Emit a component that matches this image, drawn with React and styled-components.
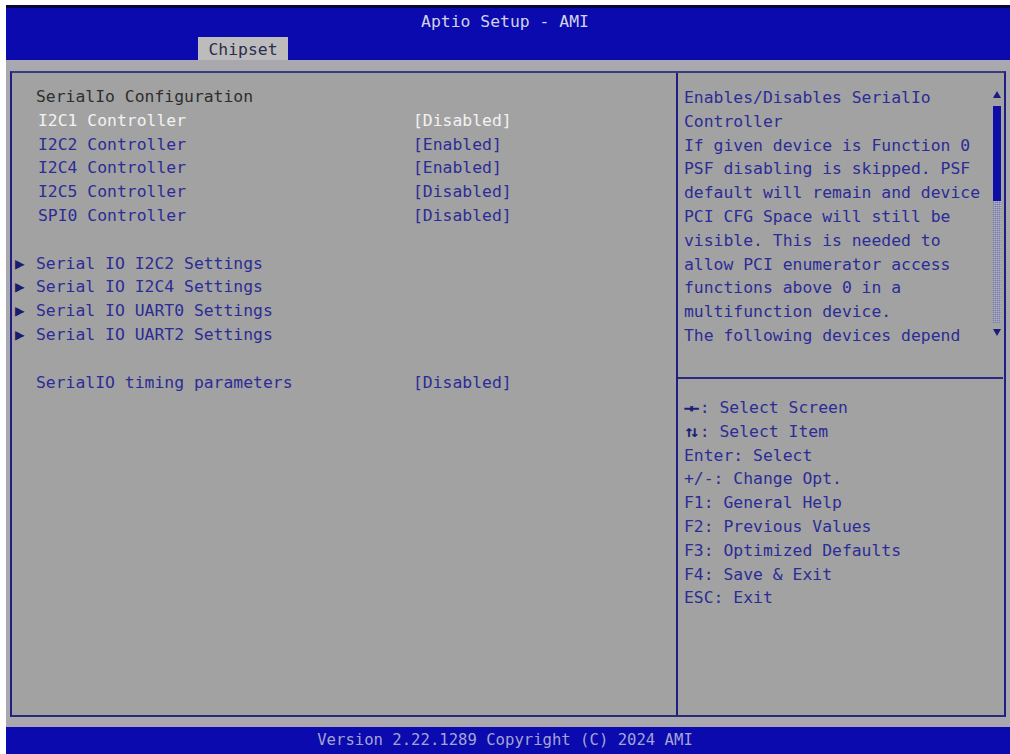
import React from "react";
import styled, { createGlobalStyle } from "styled-components";

const GlobalStyle = createGlobalStyle`
  html, body {
    margin: 0;
    padding: 0;
    background: #ffffff;
  }
`;

const Page = styled.div`
  width: 1010px;
  height: 754px;
  padding: 5px 0 0 6px;
  box-sizing: border-box;
  overflow: hidden;
  font-family: "DejaVu Sans Mono", "Liberation Mono", monospace;
  font-size: 16.4px;
`;

const Screen = styled.div`
  display: flex;
  flex-direction: column;
  height: 749px;
  background: #a3a3a5;
`;

const TopLine = styled.div`
  height: 3px;
  background: #07073a;
`;

const Header = styled.div`
  height: 52px;
  background: #0a0aae;
  display: flex;
  flex-direction: column;
  justify-content: space-between;
`;

const Title = styled.div`
  text-align: center;
  color: #d2d2e6;
  padding-top: 4px;
  padding-right: 6px;
  line-height: 20px;
`;

const TabRow = styled.div`
  display: flex;
  padding-left: 192px;
`;

const Tab = styled.div`
  width: 90px;
  height: 23px;
  background: #bcbcbc;
  color: #2c2c4e;
  text-align: center;
  line-height: 25px;
`;

const Body = styled.div`
  flex: 1;
  padding: 11px 4px 10px 4px;
  background: #a8a8ae;
  display: flex;
`;

const Panel = styled.div`
  flex: 1;
  display: grid;
  grid-template-columns: 664px 2px 1fr;
  border-top: 2px solid #3a3a7c;
  border-left: 2px solid #1e1e84;
  border-bottom: 2px solid #2a2a78;
  border-right: 2px solid #1e1e84;
  background: #a2a2a2;
`;

const Divider = styled.div`
  background: #1e1e84;
`;

const LeftPane = styled.div`
  padding-top: 12px;
`;

const Row = styled.div`
  display: flex;
  align-items: center;
  height: 23.8px;
  line-height: 23.8px;
  white-space: pre;
`;

const Marker = styled.span`
  width: 24px;
  flex: none;
  color: #1c1c6a;
  font-size: 16px;
  text-indent: 3px;
`;

const Label = styled.span`
  width: ${(p) => (p.$wide ? "377px" : "auto")};
  flex: none;
  color: ${(p) => (p.$tone === "title" ? "#2e2e2e" : p.$tone === "active" ? "#f2f2f2" : "#2c2c96")};
  margin-left: ${(p) => (p.$shift ? "2px" : "0")};
`;

const Value = styled.span`
  margin-left: ${(p) => (p.$shift ? "-2px" : "0")};
  color: ${(p) => (p.$active ? "#f2f2f2" : "#2c2c96")};
`;

const Gap = styled.div`
  height: ${(p) => p.$h}px;
`;

const RightPane = styled.div`
  display: flex;
  flex-direction: column;
`;

const HelpTop = styled.div`
  height: 306px;
  display: flex;
  padding: 13px 0 0 6px;
  box-sizing: border-box;
  border-bottom: 2px solid #2a2a86;
  margin-right: 1px;
`;

const HelpText = styled.div`
  flex: 1;
  color: #2c2c96;
  line-height: 23.8px;
  white-space: pre;
`;

const ScrollBar = styled.div`
  width: 10px;
  margin-right: 1px;
  padding-top: 5px;
  display: flex;
  flex-direction: column;
  align-items: center;
`;

const Arrow = styled.div`
  width: 0;
  height: 0;
  border-left: 4px solid transparent;
  border-right: 4px solid transparent;
  ${(p) =>
    p.$up
      ? "border-bottom: 7px solid #1a1a80;"
      : "border-top: 7px solid #1a1a80;"}
  margin: ${(p) => (p.$up ? "0 0 8px" : "6px 0 0")};
`;

const Thumb = styled.div`
  width: 8px;
  height: 95px;
  background: #0d0da8;
`;

const Track = styled.div`
  width: 8px;
  height: 122px;
  background-color: #b4b4c2;
  background-image: repeating-linear-gradient(
      0deg,
      rgba(80, 80, 150, 0.35) 0 1px,
      transparent 1px 2px
    ),
    repeating-linear-gradient(90deg, rgba(80, 80, 150, 0.3) 0 1px, transparent 1px 2px);
`;

const KeyList = styled.div`
  padding: 17px 0 0 6px;
  color: #2c2c96;
  line-height: 23.8px;
  white-space: pre;
`;

const KeyLine = styled.div`
  height: 23.8px;
`;

const Arrows = styled.span`
  letter-spacing: -4px;
  margin-right: 4px;
  color: #1c1c7a;
  font-weight: bold;
`;

const Footer = styled.div`
  height: 27px;
  background: #0a0aae;
  color: #a4a4d4;
  text-align: center;
  line-height: 27px;
  font-size: 15.6px;
  padding-right: 6px;
`;

const settings = [
  { label: "I2C1 Controller", value: "[Disabled]", active: true },
  { label: "I2C2 Controller", value: "[Enabled]" },
  { label: "I2C4 Controller", value: "[Enabled]" },
  { label: "I2C5 Controller", value: "[Disabled]" },
  { label: "SPI0 Controller", value: "[Disabled]" },
];

const submenus = [
  "Serial IO I2C2 Settings",
  "Serial IO I2C4 Settings",
  "Serial IO UART0 Settings",
  "Serial IO UART2 Settings",
];

const helpLines = [
  "Enables/Disables SerialIo",
  "Controller",
  "If given device is Function 0",
  "PSF disabling is skipped. PSF",
  "default will remain and device",
  "PCI CFG Space will still be",
  "visible. This is needed to",
  "allow PCI enumerator access",
  "functions above 0 in a",
  "multifunction device.",
  "The following devices depend",
];

const keys = [
  { glyph: "→←", text: "Select Screen" },
  { glyph: "↑↓", text: "Select Item" },
  { text: "Enter: Select" },
  { text: "+/-: Change Opt." },
  { text: "F1: General Help" },
  { text: "F2: Previous Values" },
  { text: "F3: Optimized Defaults" },
  { text: "F4: Save & Exit" },
  { text: "ESC: Exit" },
];

function App() {
  return (
    <Page>
      <GlobalStyle />
      <Screen>
        <TopLine />
        <Header>
          <Title>Aptio Setup - AMI</Title>
          <TabRow>
            <Tab>Chipset</Tab>
          </TabRow>
        </Header>
        <Body>
          <Panel>
            <LeftPane>
              <Row>
                <Marker />
                <Label $tone="title">SerialIo Configuration</Label>
              </Row>
              {settings.map((s) => (
                <Row key={s.label}>
                  <Marker />
                  <Label $wide $shift $tone={s.active ? "active" : "item"}>
                    {s.label}
                  </Label>
                  <Value $shift $active={s.active}>
                    {s.value}
                  </Value>
                </Row>
              ))}
              <Gap $h={23.8} />
              {submenus.map((m) => (
                <Row key={m}>
                  <Marker>▶</Marker>
                  <Label $tone="item">{m}</Label>
                </Row>
              ))}
              <Gap $h={23.8} />
              <Row>
                <Marker />
                <Label $wide $tone="item">
                  SerialIO timing parameters
                </Label>
                <Value>[Disabled]</Value>
              </Row>
            </LeftPane>
            <Divider />
            <RightPane>
              <HelpTop>
                <HelpText>{helpLines.join("\n")}</HelpText>
                <ScrollBar>
                  <Arrow $up />
                  <Thumb />
                  <Track />
                  <Arrow />
                </ScrollBar>
              </HelpTop>
              <KeyList>
                {keys.map((k) => (
                  <KeyLine key={k.text}>
                    {k.glyph ? (
                      <>
                        <Arrows>{k.glyph}</Arrows>: {k.text}
                      </>
                    ) : (
                      k.text
                    )}
                  </KeyLine>
                ))}
              </KeyList>
            </RightPane>
          </Panel>
        </Body>
        <Footer>Version 2.22.1289 Copyright (C) 2024 AMI</Footer>
      </Screen>
    </Page>
  );
}

export default App;
